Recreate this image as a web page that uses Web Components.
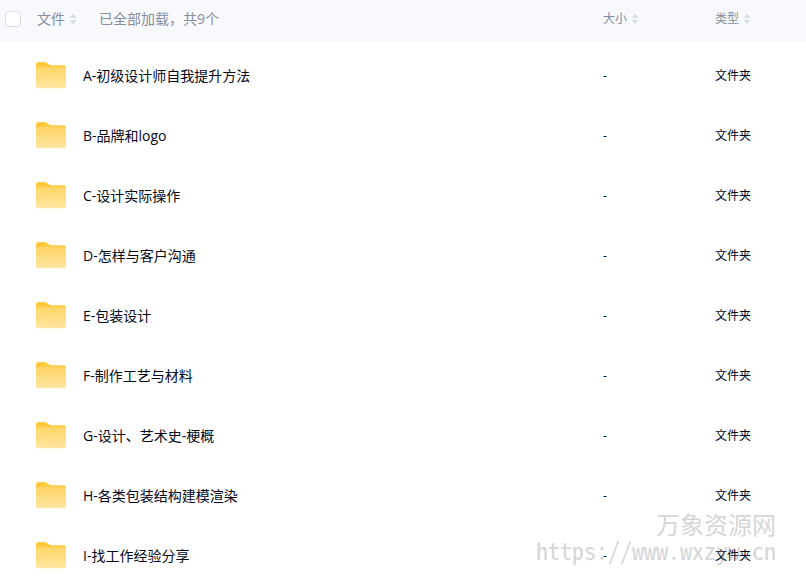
<!DOCTYPE html>
<html lang="zh-CN">
<head>
<meta charset="utf-8">
<title>文件</title>
<style>
    body {
        margin: 0;
        background: #fff;
        color: #03081a;
        font-family: "Open Sans", "Noto Sans CJK SC", sans-serif;
        font-size: 14px;
        line-height: 20px;
    }
</style>
</head>
<body>
<file-browser>
    <file-table count="9"></file-table>
    <water-mark slot="watermark">
        <span slot="name">万象资源网</span>
        <span slot="url">https://www.wxzyw.cn</span>
    </water-mark>
</file-browser>

<script>
class FolderIcon extends HTMLElement {
    constructor() {
        super();
        this.attachShadow({mode: 'open'});
    }
    connectedCallback() {
        this.shadowRoot.innerHTML = `
            <style>
                :host {
                    display: block;
                    width: 30px;
                }
                svg {
                    display: block;
                }
            </style>
            <svg width="30" height="30" viewBox="0 0 30 30" aria-hidden="true">
                <defs>
                    <linearGradient id="front" x1="0" y1="0" x2="0" y2="1">
                        <stop offset="0" stop-color="#ffd465"/>
                        <stop offset="1" stop-color="#ffe6a1"/>
                    </linearGradient>
                </defs>
                <path fill="#fdc93c" d="M0 3.700Q0 1 2.700 1H8.500Q10.500 1 11.800 2.500Q13.300 4.200 15.500 4.200H27.500Q30 4.200 30 6.700V14H0Z"/>
                <path fill="url(#front)" d="M0 8Q0 5.800 2.200 5.800H27.500Q30 5.800 30 8V24.500Q30 27.200 27.200 27.200H2.800Q0 27.200 0 24.500Z"/>
            </svg>
        `;
    }
}

class SortButton extends HTMLElement {
    constructor() {
        super();
        this.attachShadow({mode: 'open'});
    }
    connectedCallback() {
        this.shadowRoot.innerHTML = `
            <style>
                :host {
                    display: inline-block;
                }
                button {
                    display: flex;
                    align-items: center;
                    gap: 4px;
                    padding: 0;
                    border: 0;
                    background: none;
                    color: inherit;
                    font: inherit;
                    cursor: pointer;
                }
                svg {
                    display: block;
                    fill: #d9dce3;
                }
            </style>
            <button type="button">
                <slot></slot>
                <svg width="8" height="12" viewBox="0 0 8 12" aria-hidden="true">
                    <path d="M4 .8L7 4.200Q7.300 5 6.500 5H1.500Q.7 5 1 4.200Z"/>
                    <path d="M4 11.200L7 7.800Q7.300 7 6.500 7H1.500Q.7 7 1 7.800Z"/>
                </svg>
            </button>
        `;
    }
}

class FileTable extends HTMLElement {
    constructor() {
        super();
        this.attachShadow({mode: 'open'});
        this.files = [
            'A-初级设计师自我提升方法',
            'B-品牌和logo',
            'C-设计实际操作',
            'D-怎样与客户沟通',
            'E-包装设计',
            'F-制作工艺与材料',
            'G-设计、艺术史-梗概',
            'H-各类包装结构建模渲染',
            'I-找工作经验分享'
        ];
    }

    getRow(name) {
        return `
            <tr>
                <td></td>
                <td>
                    <div class="file">
                        <folder-icon></folder-icon>
                        <a href="#">${name}</a>
                    </div>
                </td>
                <td class="small">-</td>
                <td class="small">文件夹</td>
            </tr>
        `;
    }

    getStyles() {
        return `
            <style>
                :host {
                    display: block;
                }
                table {
                    width: 100%;
                    border-collapse: collapse;
                    table-layout: fixed;
                }
                th, td {
                    padding: 0;
                    text-align: left;
                    font-weight: normal;
                }
                .check {
                    width: 36px;
                }
                .size {
                    width: 112px;
                }
                .type {
                    width: 91px;
                }
                thead {
                    background: #f7f9fd;
                    color: #878c9c;
                }
                th {
                    height: 38px;
                    padding-bottom: 4px;
                }
                tbody::before {
                    content: "";
                    display: block;
                    height: 4px;
                }
                td {
                    height: 60px;
                }
                .small {
                    font-size: 12px;
                }
                .title {
                    display: flex;
                    align-items: center;
                    gap: 22px;
                    padding-left: 1px;
                }
                .file {
                    display: flex;
                    align-items: center;
                    gap: 17px;
                }
                a {
                    color: inherit;
                    text-decoration: none;
                }
                input {
                    appearance: none;
                    display: block;
                    box-sizing: border-box;
                    width: 16px;
                    height: 16px;
                    margin: 0 0 0 5px;
                    border: 1px solid #d9dce3;
                    border-radius: 4px;
                    background: #fff;
                }
            </style>
        `;
    }

    connectedCallback() {
        this.shadowRoot.innerHTML = `
            ${this.getStyles()}
            <table>
                <colgroup>
                    <col class="check"><col><col class="size"><col class="type">
                </colgroup>
                <thead>
                    <tr>
                        <th><input type="checkbox" aria-label="全选"></th>
                        <th>
                            <div class="title">
                                <sort-button>文件</sort-button>
                                <span>已全部加载，共${this.getAttribute('count')}个</span>
                            </div>
                        </th>
                        <th class="small"><sort-button>大小</sort-button></th>
                        <th class="small"><sort-button>类型</sort-button></th>
                    </tr>
                </thead>
                <tbody>
                    ${this.files.map(name => this.getRow(name)).join('')}
                </tbody>
            </table>
        `;
    }
}

class WaterMark extends HTMLElement {
    constructor() {
        super();
        this.attachShadow({mode: 'open'});
    }
    connectedCallback() {
        this.shadowRoot.innerHTML = `
            <style>
                :host {
                    display: block;
                    color: #d6d6d6;
                    font-family: "Noto Sans CJK SC", sans-serif;
                    font-size: 24px;
                    line-height: 26px;
                    text-align: right;
                }
                .url {
                    font-feature-settings: "hwid";
                }
            </style>
            <div><slot name="name"></slot></div>
            <div class="url"><slot name="url"></slot></div>
        `;
    }
}

class FileBrowser extends HTMLElement {
    constructor() {
        super();
        this.attachShadow({mode: 'open'});
    }
    connectedCallback() {
        this.shadowRoot.innerHTML = `
            <style>
                :host {
                    display: block;
                    position: relative;
                    z-index: 0;
                }
                /* sits under the rows */
                ::slotted([slot="watermark"]) {
                    position: absolute;
                    right: 30px;
                    bottom: 23px;
                    z-index: -1;
                }
            </style>
            <slot></slot>
            <slot name="watermark"></slot>
        `;
    }
}

customElements.define('folder-icon', FolderIcon);
customElements.define('sort-button', SortButton);
customElements.define('file-table', FileTable);
customElements.define('water-mark', WaterMark);
customElements.define('file-browser', FileBrowser);
</script>
</body>
</html>
